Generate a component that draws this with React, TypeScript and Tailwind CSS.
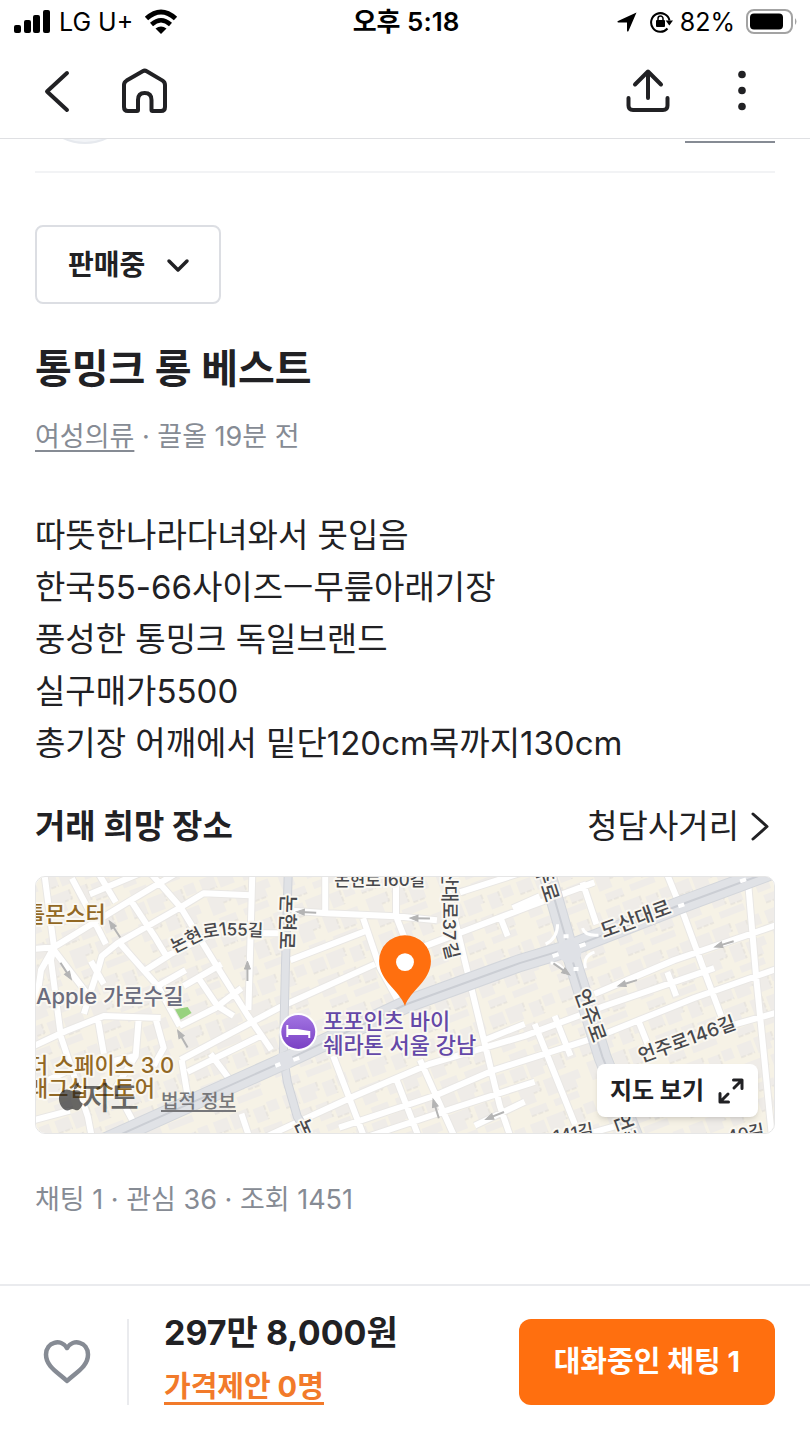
import React, { useState } from 'react';

const APP_FONT = "font-['Inter','Noto_Sans_CJK_KR',sans-serif]";

function StatusBar() {
    return (
        <div className="grid grid-cols-3 items-center h-[44px] pl-[14px] pr-[12px] text-[25px] leading-[30px] text-black">
            <div className="flex items-center">
                <svg width="36" height="24" viewBox="0 0 36 24">
                    <rect x="0" y="15" width="7" height="8" rx="2" />
                    <rect x="10" y="10" width="7" height="13" rx="2" />
                    <rect x="19" y="5" width="7" height="18" rx="2" />
                    <rect x="29" y="0" width="7" height="23" rx="2" />
                </svg>
                <span className="ml-[9px]">LG U+</span>
                <svg className="ml-[11px]" width="34" height="26" viewBox="0 0 34 26">
                    <path d="M2.5 9.5 Q17 -3.5 31.5 9.5" fill="none" stroke="#000" strokeWidth="5" />
                    <path d="M7.5 15.5 Q17 7 26.5 15.5" fill="none" stroke="#000" strokeWidth="4.5" />
                    <path d="M11.5 19.5 Q17 15.5 22.5 19.5 L17 25 Z" />
                </svg>
            </div>
            <div className="text-center text-[26px] font-semibold">오후 5:18</div>
            <div className="flex items-center justify-end">
                <svg width="20" height="20" viewBox="0 0 20 20">
                    <path d="M19.5 0.5 L11.5 19 Q10.5 20.5 10 18.5 V10.5 H1.5 Q-0.5 10 1 9 Z" />
                </svg>
                <svg className="ml-[13px]" width="23" height="22" viewBox="0 0 23 22">
                    <path d="M17.5 17.5 A9.3 9.3 0 1 1 19.5 9.5" fill="none" stroke="#000" strokeWidth="2" />
                    <path d="M15.7 9.5 H23 L19.3 14.5 Z" />
                    <rect x="6" y="9" width="9" height="7" rx="1" />
                    <path d="M8 10 V7.5 A2.5 2.5 0 0 1 13 7.5 V10" fill="none" stroke="#000" strokeWidth="1.5" />
                </svg>
                <span className="ml-[7px]">82%</span>
                <svg className="ml-[11px]" width="52" height="26" viewBox="0 0 52 26">
                    <rect x="1" y="1" width="45" height="23" rx="7" fill="none" stroke="#a3a3a3" strokeWidth="2" />
                    <rect x="4" y="4.5" width="33" height="16" rx="4" />
                    <path d="M49 9 Q52 12.5 49 16 Z" fill="#a3a3a3" />
                </svg>
            </div>
        </div>
    );
}

function NavBar() {
    return (
        <nav className="flex items-center h-[95px] pl-[42px] pr-[32px] border-b border-[#dfe0e3]">
            <button aria-label="뒤로">
                <svg width="32" height="48" viewBox="0 0 32 48" fill="none" stroke="#212124" strokeWidth="4" strokeLinecap="round" strokeLinejoin="round">
                    <path d="M25 6 L5 24.5 L25 43" />
                </svg>
            </button>
            <button aria-label="홈" className="ml-[46px]">
                <svg width="50" height="48" viewBox="0 0 50 48" fill="none" stroke="#212124" strokeWidth="4" strokeLinecap="round" strokeLinejoin="round">
                    <path d="M22.7 4.2 L6.6 13.6 Q4 15.2 4 18 V40 Q4 44 8 44 H17 Q18 44 18 43 V33 Q18 26 24.7 26 Q31.5 26 31.5 33 V43 Q31.5 44 32.5 44 H41 Q45 44 45 40 V18 Q45 15.2 42.6 13.6 L26.7 4.2 Q24.7 3 22.7 4.2 Z" />
                </svg>
            </button>
            <button aria-label="공유" className="ml-auto">
                <svg width="48" height="48" viewBox="0 0 48 48" fill="none" stroke="#212124" strokeWidth="4" strokeLinecap="round" strokeLinejoin="round">
                    <path d="M24 31 V5 M11 17.5 L24 4.5 L37 17.5" />
                    <path d="M4.5 31 V38.5 Q4.5 43 9 43 H39 Q43.5 43 43.5 38.5 V31" />
                </svg>
            </button>
            <button aria-label="더보기" className="ml-[48px]">
                <svg width="58" height="48" viewBox="0 0 58 48" fill="#212124">
                    <circle cx="22" cy="7.5" r="3.8" />
                    <circle cx="22" cy="23.5" r="3.8" />
                    <circle cx="22" cy="39.5" r="3.8" />
                </svg>
            </button>
        </nav>
    );
}

// one-way street arrows
const arrows = [
    { x: 79, y: 53, r: 237 },
    { x: 30, y: 95, r: 57 },
    { x: 212, y: 95, r: 270 },
    { x: 147, y: 163, r: 240 },
    { x: 271, y: 36, r: 183 },
    { x: 385, y: 42, r: 181 },
    { x: 527, y: 93, r: 35 },
    { x: 593, y: 107, r: 163 },
    { x: 690, y: 68, r: 163 },
    { x: 401, y: 233, r: 253 },
    { x: 460, y: 240, r: 158 },
];

const mainRoads = [
    'M60 270 L245 187 L372 128 L485 87 L535 72 L645 29 L745 -8',
    'M511 -8 L535 75 L568 181 L602 266',
];

const smallRoads = [
    'M8 -6 L18 71 L15 84 L25 161 L52 241 L56 262',
    'M-4 73 L18 71 L95 24 L142 -4',
    'M18 71 L5 94 L0 130',
    'M18 74 L50 116',
    'M36 2 L52 32 L70 68',
    'M54 18 L130 -14',
    'M80 26 L62 -4',
    'M55 85 L68 108',
    'M116 -2 L145 31 L180 88 L212 139 L236 174',
    'M85 68 L122 110 L144 150',
    'M95 24 L120 62 L132 82',
    'M62 94 L66 80 L82 67 L145 31 L168 17 L215 19',
    'M48 138 L56 112 L62 94',
    'M107 96 L135 78 L180 56',
    'M122 110 L150 94',
    'M144 150 L180 132 L206 112',
    'M148 110 L186 88',
    'M163 102 L182 130 L198 140',
    'M217 -6 L213 134',
    'M215 57 L250 57',
    'M145 184 L245 131 L340 88',
    'M-4 171 L30 155 L68 140 L125 142',
    'M62 143 L68 178',
    'M103 142 L100 180 L78 215',
    'M120 143 L128 172 L118 190',
    'M152 196 L225 160',
    'M175 178 L196 206',
    'M146 184 L152 220',
    'M-4 212 L30 196 L100 180',
    'M-4 245 L34 235',
    'M90 232 L106 262',
    'M206 238 L214 262',
    'M290 -6 L290 37',
    'M361 -6 L361 40 L372 68',
    'M250 34 L292 37 L361 40 L402 44',
    'M328 42 L345 92 L366 130',
    'M255 84 L330 55',
    'M410 0 L430 85 L465 230 L476 262',
    'M425 16 L500 -8',
    'M390 70 L495 30 L560 6',
    'M466 42 L473 60',
    'M448 165 L490 148',
    'M220 266 L320 220 L395 188 L490 160 L570 130 L680 92',
    'M298 180 L330 264',
    'M385 184 L420 262',
    'M304 252 L400 220 L460 194 L560 162 L660 122 L745 92',
    'M330 262 L420 232 L500 206',
    'M360 200 L384 262',
    'M500 148 L545 260',
    'M520 140 L536 180',
    'M440 250 L490 226',
    'M560 118 L640 84 L745 48',
    'M548 6 L562 48',
    'M632 -4 L650 40 L672 100 L690 148',
    'M714 6 L722 100 L730 180 L738 262',
    'M660 160 L745 136',
    'M604 145 L614 170',
    'M633 96 L642 120',
    'M505 20 L478 32',
    'M540 262 L590 248',
];

function MapCanvas() {
    return (
        <svg className="w-full h-full block" viewBox="0 0 740 258" preserveAspectRatio="xMidYMid slice" role="img" aria-label="청담사거리 지도">
            <defs>
                <pattern id="blocks" width="74" height="58" patternUnits="userSpaceOnUse" patternTransform="rotate(-21)">
                    <rect width="74" height="58" fill="#f6f2e6" />
                    <path d="M3 4h15v13h-15z M21 3h19v9h-4v7h-15z M45 6h12v15h-12z M60 4h11v11h-11z M4 24h22v10h-8v9h-14z M31 25h13v17h-13z M48 27h20v9h-6v8h-14z M8 47h18v8h-18z M34 47h26v7h-26z" fill="#efece8" />
                    <path d="M3 17h15M40 3v9M57 6v15M26 24v10h-8M44 25v17M48 44h14M8 55h18" fill="none" stroke="#e0dcd7" strokeWidth="1" strokeDasharray="5 2" />
                </pattern>
                <linearGradient id="hotel" x1="0" y1="0" x2="0" y2="1">
                    <stop offset="0" stopColor="#a274e2" />
                    <stop offset="1" stopColor="#7a41c4" />
                </linearGradient>
            </defs>
            <rect width="740" height="258" fill="url(#blocks)" />
            <path d="M136 134 L152 131 L156 137 L141 146 Z" fill="#98d27f" />

            <g fill="none" strokeLinejoin="round">
                <path d={smallRoads.join(' ')} stroke="#e9e7e4" strokeWidth="8" />
                <path d={smallRoads.join(' ')} stroke="#fff" strokeWidth="6" />
                <path d="M253 -6 L250 94 L248 180 L252 206 L262 241 L276 264" stroke="#d0d3d9" strokeWidth="9" />
                <path d="M253 -6 L250 94 L248 180 L252 206 L262 241 L276 264" stroke="#e0e2e6" strokeWidth="7" />
                <path d={mainRoads.join(' ')} stroke="#d3d6db" strokeWidth="18" />
                <path d={mainRoads.join(' ')} stroke="#e0e2e6" strokeWidth="16" />
                <path d={mainRoads.join(' ')} stroke="#cbced4" strokeWidth="2" />
                <circle cx="535" cy="75" r="12" fill="#dfe1e6" />
                <circle cx="249" cy="185" r="9" fill="#dfe1e6" />
                <path d="M511 68 Q523 62 523 48 M548 52 Q550 60 564 59 M516 87 Q526 86 532 98 M551 92 Q548 80 560 76" stroke="#fff" strokeWidth="3" />
                <path d="M529 60h5M545 70l6 -2M539 93h5M518 80l6 -2M240 190l5 -2M258 184l6 -2M644 30l6 -2M706 5l6 -2" stroke="#fff" strokeWidth="4" />
            </g>

            {arrows.map((a, i) => (
                <g key={i} transform={`translate(${a.x} ${a.y}) rotate(${a.r})`} stroke="#b4b4b4" strokeWidth="2" fill="#b4b4b4">
                    <path d="M-10 0 H6" />
                    <path d="M2 -3 L10 0 L2 3 Z" strokeWidth="1" />
                </g>
            ))}

            <g stroke="#faf8f2" strokeWidth="4" strokeLinejoin="round" paintOrder="stroke" fill="#48484c" fontSize="18" fontWeight="500">
                <text x="-11" y="46" fontSize="22" fill="#926824">틀몬스터</text>
                <text x="0" y="128" fontSize="22" fill="#6b6c7d">Apple 가로수길</text>
                <text x="-8" y="197" fontSize="22" fill="#926824">더 스페이스 3.0</text>
                <text x="-8" y="220" fontSize="22" fill="#926824">래그십 스토어</text>
                <text transform="translate(139 77) rotate(-27)">논현</text>
                <text transform="translate(168 62) rotate(-8)">로1</text>
                <text transform="translate(191 59) rotate(2)" fontSize="17">55길</text>
                <text x="299" y="10" fontSize="17">논현로160길</text>
                <text transform="translate(246 18) rotate(92)" fontSize="20">논현로</text>
                <text transform="translate(408 -7) rotate(90)" fontSize="18">산대로37</text>
                <text transform="translate(408 68) rotate(76)" fontSize="18">길</text>
                <text transform="translate(500 -8) rotate(72)" fontSize="20">주로</text>
                <text transform="translate(569 62) rotate(-20)" fontSize="20">도산대로</text>
                <text transform="translate(540 116) rotate(70)" fontSize="20">언주로</text>
                <text transform="translate(607 187) rotate(-20)" fontSize="19">언주로146길</text>
                <text transform="translate(579 240) rotate(70)" fontSize="20">언주로</text>
                <text transform="translate(259 247) rotate(66)" fontSize="20">논현로</text>
                <text transform="translate(520 267) rotate(-10)" fontSize="17">141길</text>
                <text transform="translate(694 267) rotate(-10)" fontSize="17">40길</text>
                <text x="288" y="153" fontSize="22" fill="#6448a8">포포인츠 바이</text>
                <text x="288" y="177" fontSize="22" fill="#6448a8">쉐라톤 서울 강남</text>
            </g>

            <circle cx="263" cy="156" r="19" fill="#fff" />
            <circle cx="263" cy="156" r="17" fill="url(#hotel)" />
            <path d="M252 149 V161 M252 158 H274 M274 162 V155" fill="none" stroke="#fff" strokeWidth="2" />
            <path d="M252 153 H262 L274 155 V158 H252 Z" fill="#fff" />

            <path d="M370 130 C365 115 344 105 344 85 A26 26 0 0 1 396 85 C396 105 375 115 370 130 Z" fill="#ff6f0f" />
            <circle cx="370" cy="86" r="9" fill="#fff" />

            {/* Apple Maps credit */}
            <g opacity="0.65" fill="#1c1c1e">
                <path d="M38 214 C38 209 41 207 43 207 C43 211 41 213 38 214 Z M32 214 C35 214 36 216 38 215 C41 214 43 214 46 217 C42 220 43 226 47 228 C45 233 42 236 39 234 C37 233 36 233 34 234 C29 237 23 230 23 223 C23 217 28 213 32 214 Z" />
                <text x="46" y="233" fontSize="31" fontWeight="500">지도</text>
            </g>
        </svg>
    );
}

function MapCard() {
    return (
        <div className="relative mt-[28px] h-[258px] rounded-[10px] overflow-hidden border border-[#e6e6e6]">
            <MapCanvas />
            <a href="#legal" className="absolute left-[125px] bottom-[19px] text-[19px] leading-[24px] font-medium text-[#77777a] underline underline-offset-2 decoration-2">법적 정보</a>
            <button className="absolute right-[16px] bottom-[16px] flex items-center h-[53px] px-[13px] rounded-[8px] bg-white shadow-md text-[24px] font-bold">
                지도 보기
                <svg className="ml-[13px]" width="28" height="28" viewBox="0 0 28 28" fill="none" stroke="#212124" strokeWidth="3" strokeLinecap="round" strokeLinejoin="round">
                    <path d="M16.5 3 H25 V11.5 M25 3 L17 11 M11.5 25 H3 V16.5 M3 25 L11 17" />
                </svg>
            </button>
        </div>
    );
}

function BottomBar() {
    return (
        <footer className="flex items-center mt-[66px] pl-[42px] pr-[35px] pt-[33px] pb-[34px] border-t-2 border-[#eaebee]">
            <button aria-label="관심">
                <svg width="50" height="48" viewBox="0 0 50 48" fill="none" stroke="#868b94" strokeWidth="4.5" strokeLinejoin="round">
                    <path d="M25 43 C17 35 4 29 4 16.5 C4 4 19 0 25 10 C31 0 46 4 46 16.5 C46 29 33 35 25 43 Z" />
                </svg>
            </button>
            <div className="ml-[35px] w-[2px] h-[86px] bg-[#eaebee]" />
            <div className="ml-[35px] flex flex-col items-start gap-[25px]">
                <div className="text-[34px] leading-[28px] font-bold">297만 8,000원</div>
                <a href="#offer" className="border-b-3 border-[#f27a2a] text-[29px] leading-[30px] font-bold text-[#f27a2a]">가격제안 0명</a>
            </div>
            <button className="ml-auto h-[86px] px-[35px] rounded-[12px] bg-[#ff6f0f] text-[29px] font-bold text-white">대화중인 채팅 1</button>
        </footer>
    );
}

function App() {
    const [status, setStatus] = useState<string>('판매중');

    return (
        <div className={`min-h-screen bg-white text-[#212124] ${APP_FONT}`}>
            <StatusBar />
            <NavBar />
            <main className="px-[35px]">
                {/* seller row, scrolled under the nav bar */}
                <div className="flex items-end justify-between h-[34px] pb-[27px] border-b-2 border-[#f2f3f5] overflow-hidden">
                    <div className="w-[100px] h-[100px] shrink-0 rounded-full bg-[#f2f4f7] border-2 border-[#e6e9ee]" />
                    <a href="#manner" aria-label="매너온도" className="w-[90px] h-[30px] mb-[1px] border-b-2 border-[#868b94]" />
                </div>

                <div className="relative mt-[52px] w-fit">
                    <select
                        aria-label="판매 상태"
                        value={status}
                        onChange={(e) => setStatus(e.target.value)}
                        className="appearance-none block w-[186px] h-[79px] pl-[31px] border-2 border-[#dcdee3] rounded-[8px] bg-white text-[28px] font-bold"
                    >
                        <option>판매중</option>
                        <option>예약중</option>
                        <option>거래완료</option>
                    </select>
                    <svg className="absolute right-[30px] top-[32px] pointer-events-none" width="26" height="18" viewBox="0 0 26 18" fill="none" stroke="#212124" strokeWidth="3.5" strokeLinecap="round" strokeLinejoin="round">
                        <path d="M4 4 L13 13 L22 4" />
                    </svg>
                </div>

                <h1 className="mt-[39px] text-[40px] leading-[52px] font-bold">통밍크 롱 베스트</h1>
                <div className="mt-[24px] text-[27px] leading-[36px] text-[#868b94]">
                    <a href="#category" className="underline underline-offset-4 decoration-2">여성의류</a> · 끌올 19분 전
                </div>

                <div className="mt-[54px] text-[33px] leading-[52px]">
                    <p>따뜻한나라다녀와서 못입음</p>
                    <p>한국55-66사이즈ㅡ무릎아래기장</p>
                    <p>풍성한 통밍크 독일브랜드</p>
                    <p>실구매가5500</p>
                    <p>총기장 어깨에서 밑단120cm목까지130cm</p>
                </div>

                <div className="mt-[35px] flex items-center justify-between text-[33px] leading-[44px]">
                    <h2 className="font-bold">거래 희망 장소</h2>
                    <a href="#place" className="flex items-center">
                        청담사거리
                        <svg className="ml-[8px]" width="28" height="32" viewBox="0 0 28 32" fill="none" stroke="#212124" strokeWidth="3" strokeLinecap="round" strokeLinejoin="round">
                            <path d="M6 4 L20 16.5 L6 29" />
                        </svg>
                    </a>
                </div>
                <MapCard />

                <div className="mt-[48px] text-[27px] leading-[36px] text-[#868b94]">채팅 1 · 관심 36 · 조회 1451</div>
            </main>
            <BottomBar />
        </div>
    );
}

export default App;
